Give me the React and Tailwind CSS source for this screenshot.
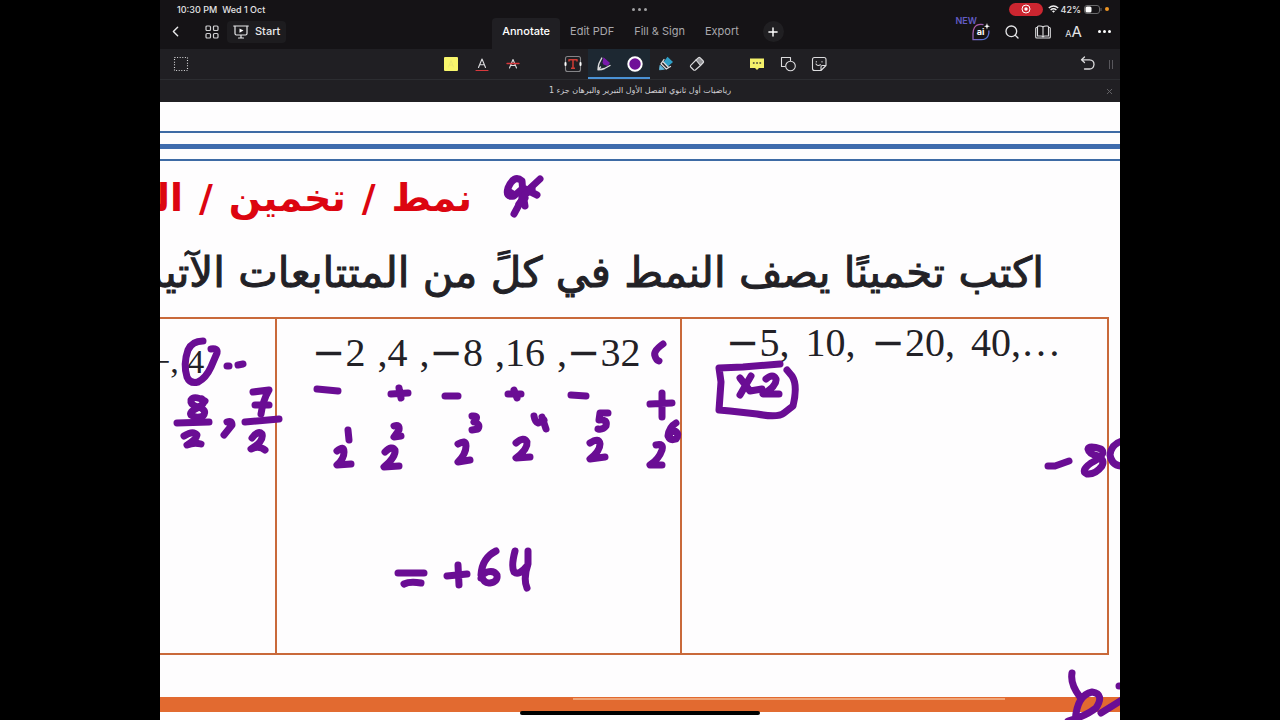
import { ChevronLeft, Plus, Search, X } from 'lucide-react'

const tabs = ['Annotate', 'Edit PDF', 'Fill & Sign', 'Export']

// Pen strokes of the annotation layer, in document coordinates
const strokes = [
  // star next to the heading
  'M540 179 L526 192 L514 214',
  'M525 206 L523 194 L522 181 Q514 174 508 188 Q505 198 514 196 L523 188 L537 195',
  'M522 197 L532 189 M508 191 L513 194 M519 204 L525 198',
  // circled 4 and dots
  'M203 341 Q192 341 188 350 Q183 364 187 377 Q190 384 198 382 Q206 378 211 367 L217 353 Q218 348 211 349',
  'M227 366 L229 366',
  'M238 365 L243 364',
  // 8/2 , 7/2
  'M205 401 Q194 395 191 400 Q190 405 198 407 Q208 410 203 416 Q196 419 191 415 Q189 412 197 408 Q207 403 202 399',
  'M177 423 L209 422',
  'M184 436 Q193 430 197 435 Q196 440 187 445 Q194 442 201 444',
  'M227 422 Q232 420 232 425 L224 435',
  'M253 392 L269 390 Q263 400 261 414',
  'M255 405 L269 405',
  'M245 422 L279 419',
  'M252 438 Q258 430 262 434 Q264 441 251 449 Q259 445 265 450',
  // signs under the second sequence
  'M317 389 L338 391',
  'M391 394 L408 393 M399 388 L401 398',
  'M445 396 L458 396',
  'M508 394 L521 394 M514 390 L517 398',
  'M571 395 L586 396',
  'M650 404 L672 403 M662 393 L662 417',
  'M663 344 Q653 351 655 356 Q656 360 659 361',
  // powers of two
  'M348 430 L349 440',
  'M337 451 Q344 445 344 452 Q344 459 337 465 L351 464',
  'M394 426 Q400 424 399 430 L394 437 L401 436',
  'M385 452 Q392 445 395 450 Q396 457 384 467 L399 466',
  'M472 416 Q480 415 474 422 Q481 424 478 429 L472 430',
  'M458 444 Q466 439 466 446 Q466 454 458 462 L470 460',
  'M534 416 Q535 422 538 423 L544 420 M542 417 L546 429',
  'M516 443 Q524 436 527 442 Q528 449 516 458 L530 457',
  'M608 413 L600 413 L599 420 Q608 419 606 426 Q603 430 598 429',
  'M590 443 Q599 437 600 444 Q600 451 590 459 L605 457',
  'M676 423 Q669 427 668 436 Q670 441 676 439 Q680 434 675 431 Q670 431 669 436',
  'M656 445 Q664 443 662 450 Q659 459 650 465 L662 465',
  // boxed x-2
  'M780 364 L743 367 L719 368 L721 382 L719 410 L730 411 L757 414 Q778 418 784 413 L793 406 Q798 385 792 376 L787 370',
  'M740 378 L750 391 L762 389 M751 376 L740 395',
  'M766 379 Q773 373 776 379 Q777 386 763 394 L779 394',
  // -80
  'M1048 466 L1055 466 L1069 461',
  'M1101 449 Q1089 445 1088 449 Q1089 454 1098 456 Q1105 460 1102 466 Q1095 475 1087 474 Q1080 471 1091 463 Q1106 455 1102 450',
  'M1122 441 Q1111 444 1110 455 Q1112 466 1122 466',
  // = +64
  'M398 573 L424 573 M404 584 Q410 581 421 583',
  'M447 576 L467 574 M458 565 L459 585',
  'M496 551 Q482 558 481 575 Q484 584 490 583 Q498 582 497 575 Q494 570 487 572 Q482 574 481 578',
  'M515 551 Q511 566 514 572 Q519 576 527 566 M528 551 L528 564 Q523 579 527 588',
  // word at the bottom right
  'M1072 673 Q1070 684 1080 697 M1075 724 Q1076 695 1092 692 Q1105 694 1096 708 Q1086 716 1068 721',
  'M1101 713 L1122 700 M1119 686 L1122 686',
]

function InkLayer() {
  return (
    <svg
      className="pointer-events-none absolute inset-0 h-full w-full"
      viewBox="160 102 960 618"
      preserveAspectRatio="xMinYMin meet"
      fill="none"
      stroke="#6a0d94"
      strokeWidth="7"
      strokeLinecap="round"
      strokeLinejoin="round"
      aria-hidden
    >
      {strokes.map((d) => (
        <path key={d} d={d} />
      ))}
    </svg>
  )
}

function ToolButton({ label, active, children }) {
  return (
    <button
      type="button"
      aria-label={label}
      className={
        active
          ? 'flex h-full w-[31px] items-center justify-center border-b-2 border-[#4a93d6] bg-[#1d2832] pt-[2px]'
          : 'flex h-full w-[31px] items-center justify-center'
      }
    >
      <svg width="18" height="18" viewBox="0 0 18 18" fill="none" stroke="#dcdcde" strokeWidth="1.1" strokeLinecap="round" strokeLinejoin="round">
        {children}
      </svg>
    </button>
  )
}

function StatusBar() {
  return (
    <div className="grid h-[18px] grid-cols-3 items-center px-[11px] text-[9px] font-medium leading-none text-[#e4e4e6]">
      <div className="flex gap-[5px] pl-[6px]">
        <span>10:30 PM</span>
        <span>Wed 1 Oct</span>
      </div>
      <div className="flex justify-center gap-[3px]">
        <i className="h-[3px] w-[3px] rounded-full bg-[#a0a0a2]" />
        <i className="h-[3px] w-[3px] rounded-full bg-[#a0a0a2]" />
        <i className="h-[3px] w-[3px] rounded-full bg-[#a0a0a2]" />
      </div>
      <div className="flex items-center justify-end">
        <span className="mr-[5px] flex h-[13px] w-[34px] items-center justify-center rounded-full bg-[#cc2630]">
          <svg width="10" height="10" viewBox="0 0 10 10" fill="none" stroke="#fff">
            <circle cx="5" cy="5" r="4" />
            <circle cx="5" cy="5" r="1.7" fill="#fff" stroke="none" />
          </svg>
        </span>
        <svg className="mr-[2px]" width="11" height="8" viewBox="0 0 11 8" fill="none" stroke="#f0f0f0" strokeWidth="1.5">
          <path d="M.8 3Q5.500-1 10.200 3M2.600 5Q5.500 2.500 8.400 5" />
          <path d="M4 6.200Q5.500 5 7 6.200L5.500 7.800Z" fill="#f0f0f0" stroke="none" />
        </svg>
        <span>42%</span>
        <svg className="ml-[3px]" width="18" height="9" viewBox="0 0 18 9" fill="none">
          <rect x=".5" y=".5" width="15" height="8" rx="2.500" stroke="#69696b" />
          <rect x="1.500" y="1.500" width="6" height="6" rx="1.500" fill="#fff" />
          <path d="M17 3V6" stroke="#69696b" />
        </svg>
        <i className="ml-[3px] h-[4px] w-[4px] rounded-full bg-[#ee9524]" />
      </div>
    </div>
  )
}

function NavBar() {
  return (
    <div className="flex h-[31px] text-[11px] font-medium text-[#a9a8ac]">
      <div className="flex flex-1 items-center pb-[4px] text-[#e8e8ea]">
        <button type="button" aria-label="Back" className="flex w-[31px] justify-center">
          <ChevronLeft size={17} strokeWidth={2} />
        </button>
        <button type="button" aria-label="Pages" className="flex w-[36px] justify-center pl-[5px]">
          <svg width="14" height="14" viewBox="0 0 14 14" fill="none" stroke="#d0d0d2" strokeWidth="1.200">
            <rect x="1" y="1" width="4.500" height="4.500" rx="1" />
            <rect x="8.500" y="1" width="4.500" height="4.500" rx="1" />
            <rect x="1" y="8.500" width="4.500" height="4.500" rx="1" />
            <rect x="8.500" y="8.500" width="4.500" height="4.500" rx="1" />
          </svg>
        </button>
        <button type="button" className="flex h-[22px] items-center gap-[6px] rounded-[4px] bg-[#1d1c1f] px-[6px]">
          <svg width="16" height="14" viewBox="0 0 16 14" fill="none" stroke="#e8e8ea" strokeWidth="1.200" strokeLinecap="round">
            <path d="M.7 1H15.300M2 1V8.500Q2 10 3.500 10H12.500Q14 10 14 8.500V1M8 10V12.500M5.500 13H10.500" />
            <path d="M6.500 3.500L10.500 5.500L6.500 7.700Z" fill="#fff" stroke="none" />
          </svg>
          Start
        </button>
      </div>
      <nav className="flex items-stretch pr-[4px]">
        {tabs.map((tab, i) => (
          <button
            key={tab}
            type="button"
            className={
              i === 0
                ? 'rounded-t-[4px] bg-[#201f23] px-[10px] pb-[4px] text-white'
                : 'px-[10px] pb-[4px] font-normal'
            }
          >
            {tab}
          </button>
        ))}
        <button type="button" aria-label="Add tab" className="ml-[14px] mt-[3px] flex h-[21px] w-[21px] items-center justify-center rounded-full bg-[#201f22] text-white">
          <Plus size={14} strokeWidth={2.5} />
        </button>
      </nav>
      <div className="flex flex-1 items-center justify-end pb-[4px] text-[#e4e4e6]">
        <button type="button" aria-label="AI assistant" className="relative flex w-[31px] justify-center">
          <span className="absolute right-[19px] -top-[7px] text-[9px] font-semibold leading-none text-[#625cc4]">NEW</span>
          <svg width="18" height="18" viewBox="0 0 18 18" fill="none">
            <defs>
              <linearGradient id="ai" x1="0" y1="0" x2="1" y2="1">
                <stop offset="0" stopColor="#c2559d" />
                <stop offset="1" stopColor="#4278df" />
              </linearGradient>
            </defs>
            <path d="M11.500 1.600Q5 .5 2.500 4.500Q1 7 1 10.500V16.700H8.500Q14 17 16 13Q17.300 10.500 16.700 7.500" stroke="url(#ai)" strokeWidth="1.300" />
            <path d="M15 0L15.700 2.500L18 3.200L15.700 4L15 6.500L14.200 4L12 3.200L14.200 2.500Z" fill="#fff" />
            <text x="8.500" y="12" textAnchor="middle" fill="#fff" fontSize="9" fontWeight="700">ai</text>
          </svg>
        </button>
        <button type="button" aria-label="Search" className="flex w-[31px] justify-center">
          <Search size={16} strokeWidth={2} />
        </button>
        <button type="button" aria-label="Reading view" className="flex w-[31px] justify-center">
          <svg width="16" height="14" viewBox="0 0 16 14" fill="none" stroke="#dcdcde" strokeWidth="1.100" strokeLinejoin="round">
            <path d="M8 2Q7 1 5 1H3.500Q2.500 1 2.500 2V11H6Q7.500 11 8 12Q8.500 11 10 11H13.500V2Q13.500 1 12.500 1H11Q9 1 8 2ZM8 2V12" />
            <path d="M2.500 2.500H1.500Q.7 2.500 .7 3.500V12Q.7 13 1.700 13H14.300Q15.300 13 15.300 12V3.500Q15.300 2.500 14.500 2.500H13.500" />
          </svg>
        </button>
        <button type="button" aria-label="Text size" className="flex w-[31px] items-baseline justify-center font-normal leading-none">
          <span className="text-[9px]">A</span>
          <span className="text-[15px]">A</span>
        </button>
        <button type="button" aria-label="More" className="flex w-[31px] justify-center gap-[2px]">
          <i className="h-[3px] w-[3px] rounded-full bg-white" />
          <i className="h-[3px] w-[3px] rounded-full bg-white" />
          <i className="h-[3px] w-[3px] rounded-full bg-white" />
        </button>
      </div>
    </div>
  )
}

function ToolBar() {
  return (
    <div className="flex h-[31px] border-b border-[#2c2d31] bg-[#201f23]">
      <div className="flex flex-1 pl-[5px]">
        <ToolButton label="Select area">
          <rect x="2.500" y="2.500" width="13" height="13" strokeDasharray="1 1.600" strokeLinecap="butt" />
        </ToolButton>
      </div>
      <div className="flex gap-[29px] pr-[16px]">
        <div className="flex">
          <ToolButton label="Highlight">
            <rect x="2" y="2" width="14" height="14" rx="1" fill="#f8f66c" stroke="none" />
            <path d="M6.500 12L9 5.500L11.500 12M7.500 10H10.500" stroke="#e6e574" strokeWidth=".8" />
          </ToolButton>
          <ToolButton label="Underline">
            <path d="M5.500 12.500L9 4L12.500 12.500M6.700 9.700H11.300" />
            <path d="M3 15.500H15" stroke="#d8393d" />
          </ToolButton>
          <ToolButton label="Strikeout">
            <path d="M5.500 13L9 4.500L12.500 13M6.700 10.500H11.300" />
            <path d="M3 8.500H15" stroke="#d8393d" strokeWidth="1.300" />
          </ToolButton>
        </div>
        <div className="flex">
          <ToolButton label="Text box">
            <rect x="1.500" y="1.500" width="15" height="15" rx="2" stroke="#858588" />
            <path d="M5 6.500V4.800H13V6.500M9 5V13.300M7 13.300H11" stroke="#cf3d35" strokeWidth="1.500" strokeLinecap="butt" />
            <path d="M1.500 8V10M16.500 8V10" stroke="#fff" strokeWidth="2" />
          </ToolButton>
          <ToolButton label="Pen" active>
            <path d="M8.500 2.200L15 8L12.500 11L8.500 9.500L7.500 7.500Z" fill="#7a1aab" stroke="none" />
            <path d="M6.800 3L4 8.500Q3.200 11 3 14.800Q7 14.600 9.500 13.500L15 10.500M3.200 14.500L5.500 12" strokeWidth="1.400" />
          </ToolButton>
          <ToolButton label="Pen colour" active>
            <circle cx="9" cy="9" r="6.700" fill="#701098" stroke="#fff" strokeWidth="2" />
          </ToolButton>
          <ToolButton label="Marker">
            <path d="M10.500 1.800L16 7L11 11.500L6.500 7Z" fill="#2f9fc7" stroke="none" />
            <path d="M7 4.500L4 8.800L9.300 14L13.500 11.500M5.800 6.500L11.300 12.200" strokeWidth="1.300" />
            <path d="M3 10.500L2.500 14.800L7 14.300Z" fill="#66bce0" stroke="#66bce0" strokeWidth=".8" />
          </ToolButton>
          <ToolButton label="Eraser">
            <path d="M8 5L10.500 2.700Q11.300 2 12 2.700L15.300 6Q16 6.800 15.300 7.500L12.500 10.500Z" fill="#929296" />
            <path d="M8 5L2.700 10.300Q2 11.300 2.700 12L5.700 15Q6.500 15.600 7.400 15L12.500 10.500" />
          </ToolButton>
        </div>
        <div className="flex">
          <ToolButton label="Comment">
            <path d="M2 3.500H16V13H11L9 15L7 13H2Z" fill="#f4f16a" stroke="none" />
            <path d="M5.500 8H6M8.800 8H9.300M12 8H12.500" stroke="#333" strokeWidth="1.500" />
          </ToolButton>
          <ToolButton label="Shapes">
            <path d="M6 11.500H2.500V2.500H11.500V5.500" />
            <circle cx="11.500" cy="11" r="4.800" />
          </ToolButton>
          <ToolButton label="Sticker">
            <path d="M16 10.500V4.500Q16 2.500 14 2.500H4.500Q2.500 2.500 2.500 4.500V13.500Q2.500 15.500 4.500 15.500H11L16 10.500ZM11 15.500V12Q11 10.500 12.500 10.500H16M6.300 6.500V7M12 6.500V7M6 9Q7.500 11.500 10.500 9.800" />
          </ToolButton>
        </div>
      </div>
      <div className="flex flex-1 items-center justify-end">
        <ToolButton label="Undo">
          <path d="M5.500 2L2.500 4.800L5.500 7.500M2.500 4.800H10.500Q15 5 15 9.500Q14.500 14 10.500 14H5.500" strokeWidth="1.300" />
        </ToolButton>
        <span className="ml-[6px] mr-[7px] h-[9px] w-[4px] border-x border-[#58575c]" />
      </div>
    </div>
  )
}

function TitleBar() {
  return (
    <div className="flex h-[22px] items-center bg-[#201f23] text-[#d2d1d5]">
      <span className="w-[22px]" />
      <h1 dir="rtl" className="flex-1 text-center font-['DejaVu_Sans',sans-serif] text-[8px] leading-none">
        رياضيات أول ثانوي الفصل الأول التبرير والبرهان جزء 1
      </h1>
      <button type="button" aria-label="Close" className="flex w-[22px] justify-center text-[#66656a]">
        <X size={9} strokeWidth={2.5} />
      </button>
    </div>
  )
}

// The serif minus is too short for these sequences, so it gets a wider face
function Minus() {
  return <span className="font-['DejaVu_Sans',sans-serif] leading-none">−</span>
}

function DocumentPage() {
  return (
    <main className="relative flex-1 overflow-hidden bg-[#fefdfe] pt-[29px] font-['Liberation_Serif',serif] text-[#222126]">
      <div className="flex h-[30px] flex-col justify-between">
        <div className="h-[2px] bg-[#3e6ba5]" />
        <div className="h-[5px] bg-[#3f6cae]" />
        <div className="h-[2px] bg-[#3e6ba5]" />
      </div>
      <h2 dir="rtl" className="flex h-[76px] gap-[16px] whitespace-nowrap pr-[648px] font-['DejaVu_Sans',sans-serif] text-[38px] font-bold leading-[74px] text-[#dc0510]">
        <span>نمط</span>
        <span>/</span>
        <span>تخمين</span>
        <span>/</span>
        <span>الـ</span>
      </h2>
      <p dir="rtl" className="h-[80px] whitespace-nowrap pr-[76px] font-['DejaVu_Sans',sans-serif] text-[42px] leading-[72px] [-webkit-text-stroke:1px_#222126]">
        اكتب تخمينًا يصف النمط في كلً من المتتابعات الآتية
      </p>
      <div className="pr-[11px]">
        <table className="h-[338px] w-full table-fixed border-collapse whitespace-nowrap border-y-2 border-r-2 border-[#c9693a] text-[40px] leading-[44px]">
          <tbody>
            <tr>
              <td className="w-[116px] overflow-hidden border-r-2 border-[#c9693a] pt-[21px] align-top text-[34px]">
                <span className="-ml-[9px]">−, 4</span>
              </td>
              <td className="w-[405px] border-r-2 border-[#c9693a] pl-[35px] pt-[12px] align-top">
                <div className="flex gap-[12px]">
                  <span><Minus />2</span>
                  <span>,4</span>
                  <span>,<Minus />8</span>
                  <span>,16</span>
                  <span>,<Minus />32</span>
                </div>
              </td>
              <td className="pl-[44px] pt-[2px] align-top">
                <div className="flex gap-[16px]">
                  <span><Minus />5,</span>
                  <span>10,</span>
                  <span><Minus />20,</span>
                  <span>40,…</span>
                </div>
              </td>
            </tr>
          </tbody>
        </table>
      </div>
      <div className="mt-[42px] h-[15px] bg-[#e26a30] pl-[43%] pt-px">
        <div className="h-[2px] w-[432px] bg-[#f0a578]" />
      </div>
      <InkLayer />
      <div className="absolute bottom-[5px] left-1/2 h-[4px] w-1/4 -translate-x-1/2 rounded-full bg-black" />
    </main>
  )
}

export default function App() {
  return (
    <div className="flex min-h-screen justify-center bg-black font-['Inter',sans-serif]">
      <div className="flex w-3/4 flex-col bg-[#151316]">
        <StatusBar />
        <NavBar />
        <ToolBar />
        <TitleBar />
        <DocumentPage />
      </div>
    </div>
  )
}
